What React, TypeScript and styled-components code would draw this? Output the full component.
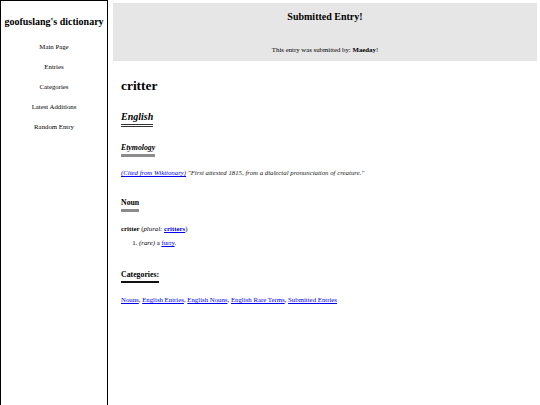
import React from 'react';
import styled, { createGlobalStyle } from 'styled-components';

const GlobalStyle = createGlobalStyle`
    html, body {
        margin: 0;
        padding: 0;
        background: #ffffff;
        color: #000000;
        font-family: "Liberation Serif", "Times New Roman", Times, serif;
        font-size: 6.8px;
    }
    a {
        color: #0000ee;
    }
`;

const Page = styled.div`
    display: flex;
    align-items: flex-start;
    min-height: 100vh;
`;

const Sidebar = styled.nav`
    flex: 0 0 auto;
    width: 108px;
    min-height: 100vh;
    border: 1px solid #000;
    border-bottom: none;
    box-sizing: border-box;
    padding-top: 15px;
    text-align: center;
`;

const SiteTitle = styled.div`
    font-size: 10px;
    line-height: 12px;
    font-weight: bold;
    white-space: nowrap;
    margin-bottom: 15px;
`;

const NavList = styled.ul`
    list-style: none;
    margin: 0;
    padding: 0;
    display: flex;
    flex-direction: column;
    gap: 12px;
`;

const NavItem = styled.li`
    line-height: 8px;
`;

const Main = styled.main`
    flex: 1;
    margin: 3px 3px 0 5px;
`;

const Notice = styled.div`
    background: #e6e6e6;
    text-align: center;
    padding: 9px 0 7px;
`;

const NoticeTitle = styled.div`
    font-size: 10px;
    line-height: 10px;
    font-weight: bold;
`;

const NoticeText = styled.div`
    margin-top: 24px;
    line-height: 8px;
`;

const Content = styled.div`
    padding-left: 8px;
    display: flex;
    flex-direction: column;
    align-items: flex-start;
`;

const Word = styled.h1`
    font-size: 13.4px;
    line-height: 16px;
    margin: 17px 0 0;
`;

const Heading = styled.h2<{ $size: number; $italic?: boolean; $line: string; $gap: number }>`
    display: inline-block;
    margin: ${(p) => p.$gap}px 0 0;
    font-size: ${(p) => p.$size}px;
    line-height: ${(p) => (p.$size > 9 ? 12 : 10)}px;
    font-style: ${(p) => (p.$italic ? 'italic' : 'normal')};
    font-weight: bold;
    padding-bottom: 1px;
    border-bottom: ${(p) => p.$line};
`;

const Line = styled.p<{ $gap: number }>`
    margin: ${(p) => p.$gap}px 0 0;
    line-height: 8px;
`;

const Citation = styled(Line)`
    font-style: italic;
    color: #222;
`;

const Senses = styled.ol`
    margin: 6px 0 0;
    padding-left: 18px;
    line-height: 8px;
`;

export default function App() {
    const nav = ['Main Page', 'Entries', 'Categories', 'Latest Additions', 'Random Entry'];
    const cats = ['Nouns', 'English Entries', 'English Nouns', 'English Rare Terms', 'Submitted Entries'];
    return (
        <>
            <GlobalStyle />
            <Page>
                <Sidebar>
                    <SiteTitle>goofuslang's dictionary</SiteTitle>
                    <NavList>
                        {nav.map((n) => (
                            <NavItem key={n}>{n}</NavItem>
                        ))}
                    </NavList>
                </Sidebar>
                <Main>
                    <Notice>
                        <NoticeTitle>Submitted Entry!</NoticeTitle>
                        <NoticeText>
                            This entry was submitted by: <b>Maeday</b>!
                        </NoticeText>
                    </Notice>
                    <Content>
                        <Word>critter</Word>
                        <Heading $size={10} $italic $gap={17} $line="3px double #333">
                            English
                        </Heading>
                        <Heading as="h3" $size={7.8} $italic $gap={16} $line="3px solid #8c8c8c">
                            Etymology
                        </Heading>
                        <Citation $gap={12}>
                            <a href="#">(Cited from Wiktionary)</a> "First attested 1815, from a dialectal
                            pronunciation of creature."
                        </Citation>
                        <Heading as="h3" $size={7.8} $gap={21} $line="3px solid #8c8c8c">
                            Noun
                        </Heading>
                        <Line $gap={13}>
                            <b>critter</b> (<i>plural:</i>{' '}
                            <a href="#">
                                <b>critters</b>
                            </a>
                            )
                        </Line>
                        <Senses>
                            <li>
                                <i>(rare)</i> a <a href="#">furry</a>.
                            </li>
                        </Senses>
                        <Heading as="h3" $size={7.8} $gap={23} $line="2px solid #111">
                            Categories:
                        </Heading>
                        <Line $gap={13}>
                            {cats.map((c, i) => (
                                <React.Fragment key={c}>
                                    <a href="#">{c}</a>
                                    {i < cats.length - 1 ? ', ' : ''}
                                </React.Fragment>
                            ))}
                        </Line>
                    </Content>
                </Main>
            </Page>
        </>
    );
}
